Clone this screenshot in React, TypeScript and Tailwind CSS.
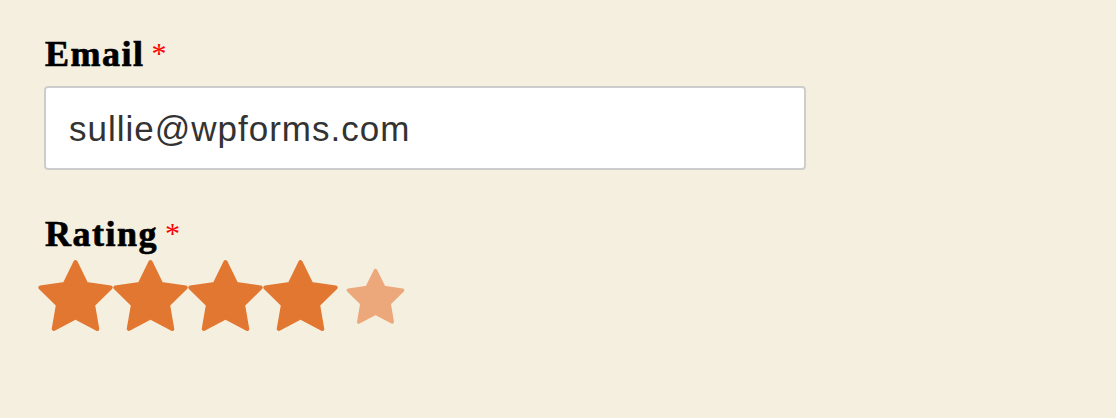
import React from "react";

const starPoints = (cx: number, cy: number, outer: number, inner: number) => {
  const pts: string[] = [];
  for (let i = 0; i < 10; i++) {
    const r = i % 2 === 0 ? outer : inner;
    const a = (-90 + i * 36) * (Math.PI / 180);
    pts.push(`${(cx + r * Math.cos(a)).toFixed(2)},${(cy + r * Math.sin(a)).toFixed(2)}`);
  }
  return pts.join(" ");
};

const Star = ({ filled, small }: { filled: boolean; small?: boolean }) => {
  const color = filled ? "#e27731" : "#eca87a";
  const outer = small ? 28.5 : 37;
  const inner = small ? 14.3 : 18.5;
  const stroke = small ? 3.5 : 4;
  return (
    <svg width={75} height={75} viewBox="0 0 75 75" className="block shrink-0">
      <polygon
        points={starPoints(37.5, 41, outer, inner)}
        fill={color}
        stroke={color}
        strokeWidth={stroke}
        strokeLinejoin="round"
      />
    </svg>
  );
};

const Label = ({ text }: { text: string }) => (
  <div className="flex items-start font-['Liberation_Serif',serif] text-[36px] leading-[36px] text-black">
    <span className="font-bold tracking-[1.5px] [-webkit-text-stroke:0.7px_black]">{text}</span>
    <span className="ml-[7px] mt-[2px] font-normal text-[30px] leading-[30px] text-[#ff0000]">*</span>
  </div>
);

export default function App() {
  return (
    <div className="w-[1116px] h-[418px] bg-[#f5efdf] overflow-hidden">
      <div className="pt-[36px] pl-[45px] flex flex-col">
        <Label text="Email" />
        <div className="mt-[14px] -ml-px w-[762px] h-[84px] bg-white border-2 border-[#cdcdcd] rounded-[4px] flex items-center pl-[23px] pt-[3px]">
          <span className="font-['Liberation_Sans',sans-serif] text-[35px] text-[#333333] tracking-[1px]">
            sullie@wpforms.com
          </span>
        </div>
        <div className="mt-[46px]">
          <Label text="Rating" />
        </div>
        <div className="mt-[6px] -ml-[7px] flex">
          <Star filled />
          <Star filled />
          <Star filled />
          <Star filled />
          <Star filled={false} small />
        </div>
      </div>
    </div>
  );
}
